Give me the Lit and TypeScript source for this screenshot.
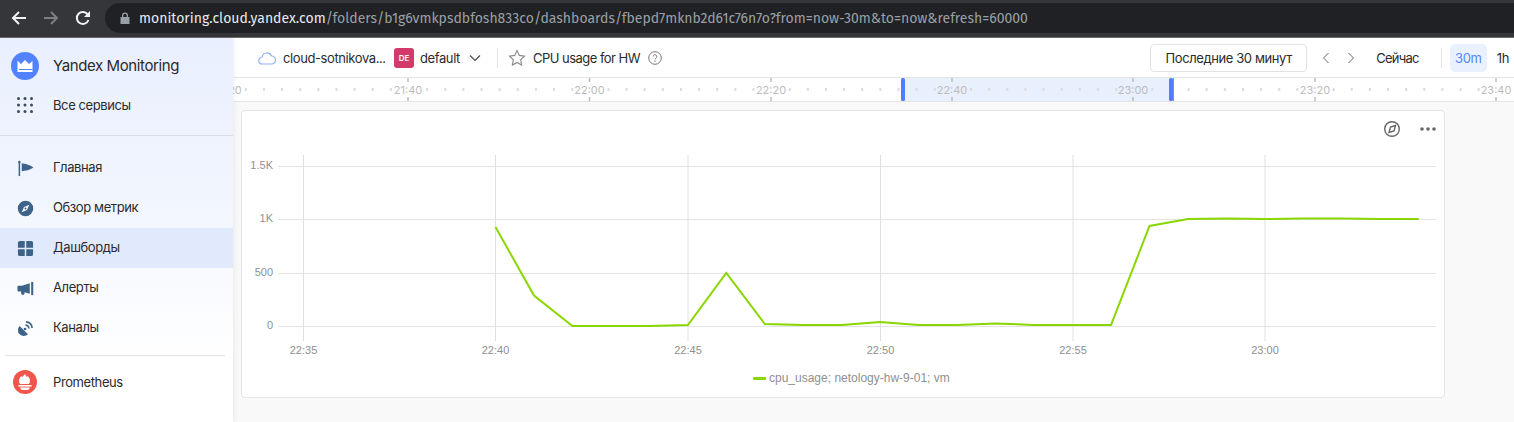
import { LitElement, html, css, svg } from 'lit';
import { customElement } from 'lit/decorators.js';

const NAV = [
  { label: 'Главная', icon: 'flag' },
  { label: 'Обзор метрик', icon: 'compass' },
  { label: 'Дашборды', icon: 'grid', active: true },
  { label: 'Алерты', icon: 'horn' },
  { label: 'Каналы', icon: 'dish' },
];

const NAV_ICONS: Record<string, any> = {
  flag: svg`<path d="M2.500 2v15" stroke="#3d6488" stroke-width="1.600"/><circle cx="2.500" cy="2" r="1.300"/><path d="M5 3.500c3 .2 9 2 12.500 4.500-3.500 2.500-9 3.800-12.500 3.800z"/>`,
  compass: svg`<path fill-rule="evenodd" d="M9 .8a8.200 8.200 0 1 1 0 16.400A8.200 8.200 0 0 1 9 .8zm4 4.200L7.400 7.400 5 13l5.600-2.400zM9 8a1 1 0 1 1 0 2 1 1 0 0 1 0-2z"/>`,
  grid: svg`<path d="M1 3a2 2 0 0 1 2-2h5.200v7.200H1zM9.800 1H15a2 2 0 0 1 2 2v5.200H9.800zM1 9.800h7.200V17H3a2 2 0 0 1-2-2zM9.800 9.800H17V15a2 2 0 0 1-2 2H9.800z"/>`,
  horn: svg`<path d="M.5 7.200c0-.7.500-1.200 1.200-1.200h3.500L13.500 3.500v11L8 13v1a1.800 1.800 0 0 1-3.600 0v-1.800H1.700C1 12.200.5 11.700.5 11z"/><path d="M15 2h2.200v14H15z"/>`,
  dish: svg`<path d="M2.800 6.400l8.800 8.800a6 6 0 0 1-8.800-8.800z"/><path d="M9.500 2a6.500 6.500 0 0 1 6.500 6.500" fill="none" stroke="#3d6488" stroke-width="1.800"/><path d="M9 5.400A3.600 3.600 0 0 1 12.600 9" fill="none" stroke="#3d6488" stroke-width="1.800"/><circle cx="8.500" cy="9.500" r="1.400"/>`,
};

@customElement('app-root')
class AppRoot extends LitElement {
  static styles = css`
    :host {
      display: block;
      width: 1514px;
      height: 422px;
      overflow: hidden;
      font-family: Inter, 'Noto Sans', sans-serif;
      font-size: 13px;
      letter-spacing: -0.4px;
      color: #2b2b2b;
      background: #f9f9f9;
    }
    .chrome {
      height: 38px;
      box-sizing: border-box;
      background: #35363a;
      border-bottom: 1px solid #6b6b6b;
      display: flex;
      align-items: center;
      padding: 0 0 1px 11px;
      gap: 16px;
    }
    .chrome svg {
      display: block;
      flex: none;
    }
    .url {
      flex: 1;
      height: 30px;
      margin-left: -2px;
      border-radius: 15px 0 0 15px;
      background: #202124;
      display: flex;
      align-items: center;
      padding-left: 15px;
      gap: 9px;
      font: 14px 'Fira Sans', 'Noto Sans', sans-serif;
      letter-spacing: 0;
      color: #9aa0a6;
    }
    .url b {
      font-weight: 400;
      color: #e8eaed;
    }
    .body {
      display: flex;
      height: 384px;
    }
    .side {
      width: 233px;
      flex: none;
      background: linear-gradient(180deg, #e9effe 0%, #f1f5fe 40%, #ffffff 85%);
      box-shadow: 1px 0 6px rgba(0, 0, 0, 0.07);
      position: relative;
      z-index: 1;
    }
    .side-head {
      padding: 8px 0 10px;
      border-bottom: 1px solid #d9dce6;
    }
    .row {
      height: 40px;
      display: flex;
      align-items: center;
    }
    .logo-row {
      height: 39px;
      font-size: 15px;
    }
    .slot {
      width: 53px;
      flex: none;
      display: flex;
      justify-content: center;
      padding-right: 3px;
      box-sizing: border-box;
    }
    .slot svg {
      display: block;
    }
    .nav {
      padding-top: 12px;
    }
    .nav-label {
      padding-bottom: 2px;
    }
    .row.active {
      background: #e1e9fc;
    }
    .side-rule {
      height: 1px;
      background: #e3e3e3;
      margin: 7px 8px 6px 5px;
    }
    .main {
      flex: 1;
      min-width: 0;
    }
    .top {
      height: 39px;
      background: #fff;
      display: flex;
      align-items: center;
      padding: 0 5px 0 25px;
      white-space: nowrap;
    }
    .crumb {
      margin-left: 7px;
      width: 106px;
    }
    .badge {
      width: 20px;
      height: 20px;
      border-radius: 3px;
      background: #d33a69;
      color: #fff;
      font-size: 8px;
      font-weight: 600;
      letter-spacing: 0;
      display: flex;
      align-items: center;
      justify-content: center;
      margin-left: 5px;
    }
    .title {
      margin-left: 7px;
      letter-spacing: -0.52px;
    }
    .now {
      margin-left: 21px;
      letter-spacing: -0.73px;
    }
    .vr {
      width: 1px;
      height: 20px;
      background: #e5e5e5;
    }
    .range {
      margin-left: auto;
      width: 157px;
      height: 28px;
      box-sizing: border-box;
      border: 1px solid #e2e2e2;
      border-radius: 4px;
      display: flex;
      align-items: center;
      justify-content: center;
    }
    .zoom-on {
      width: 37px;
      height: 28px;
      border-radius: 5px;
      background: #e9f0fe;
      color: #5a87f2;
      display: flex;
      align-items: center;
      justify-content: center;
      margin-left: 8px;
    }
    .timeline {
      display: block;
      border-top: 1px solid #e5e5e5;
      border-bottom: 1px solid #e5e5e5;
      background: #fff;
    }
    .timeline text {
      font-family: Inter, sans-serif;
      letter-spacing: 0;
    }
    .content {
      padding: 8px 0 0 8px;
    }
    .panel {
      width: 1204px;
      height: 288px;
      box-sizing: border-box;
      background: #fff;
      border: 1px solid #e5e5e5;
      border-radius: 4px;
    }
    .panel svg {
      display: block;
    }
    .panel text {
      font-family: 'Liberation Sans', Arial, sans-serif;
      letter-spacing: 0;
    }
  `;

  renderTimeline() {
    // x is counted from the left edge of the main column (page x - 233)
    const major = [
      { x: 175, t: '21:40' },
      { x: 356.5, t: '22:00' },
      { x: 538, t: '22:20' },
      { x: 719, t: '22:40' },
      { x: 900, t: '23:00' },
      { x: 1082, t: '23:20' },
      { x: 1263, t: '23:40' },
    ];
    const minor: number[] = [];
    for (let x = -6.3; x < 1290; x += 18.13) {
      if (!major.some((m) => Math.abs(m.x - x) < 10)) minor.push(x);
    }
    return html`<svg class="timeline" width="1281" height="23" viewBox="0 0 1281 23">
      <rect x="668" y="0" width="271" height="23" fill="#e8effd" />
      ${minor.map((x) => svg`<rect x=${x} y="10" width="2" height="3" fill="#dcdcdc" />`)}
      ${major.map(
        (m) => svg`
          <rect x=${m.x - 15} y="6" width="30" height="11" fill=${m.x > 668 && m.x < 939 ? '#e8effd' : '#fff'} />
          <path d="M${m.x} 0v4M${m.x} 19v4" stroke="#bdbdbd" stroke-width="1.500" />
          <text x=${m.x} y="15.500" text-anchor="middle" font-size="11" fill="#bcbcbc">${m.t}</text>`,
      )}
      <text x="-5" y="15.500" font-size="11" fill="#bcbcbc">20</text>
      <rect x="668" y="0" width="4" height="23" rx="1.500" fill="#4f7fff" />
      <rect x="936" y="0" width="4" height="23" rx="1.500" fill="#4f7fff" />
      <rect x="940" y="0" width="1" height="23" fill="#f0636a" />
    </svg>`;
  }

  renderChart() {
    // the panel's inner box starts at page (242, 111)
    const ys = [
      { y: 55, t: '1.5K' },
      { y: 108, t: '1K' },
      { y: 162, t: '500' },
      { y: 215, t: '0' },
    ];
    const xs = [
      { x: 61.5, t: '22:35' },
      { x: 253.5, t: '22:40' },
      { x: 446, t: '22:45' },
      { x: 638.5, t: '22:50' },
      { x: 831, t: '22:55' },
      { x: 1023, t: '23:00' },
    ];
    const vals = [116, 184.5, 215, 215, 215, 214, 162, 213, 214, 214, 211, 214, 214, 212.5, 214, 214, 214, 115, 108, 107.5, 108, 107.5, 107.5, 108, 108];
    const pts = vals.map((y, i) => `${(253.5 + i * 38.47).toFixed(1)},${y}`).join(' ');
    return html`<svg width="1202" height="286" viewBox="0 0 1202 286">
      ${ys.map(
        (l) => svg`
          <path d="M36 ${l.y + 0.5}H1194" stroke="#e4e4e4" />
          <text x="31" y=${l.y + 3} text-anchor="end" font-size="11" fill="#8f8f8f">${l.t}</text>`,
      )}
      ${xs.map(
        (l) => svg`
          <path d="M${l.x} 44V230" stroke="#e0e0e0" />
          <text x=${l.x} y="243" text-anchor="middle" font-size="11" fill="#8f8f8f">${l.t}</text>`,
      )}
      <polyline points=${pts} fill="none" stroke="#8ad600" stroke-width="2" />
      <rect x="511" y="266" width="13" height="3" rx="1" fill="#8ad600" />
      <text x="527" y="271" font-size="12" fill="#8f8f8f">cpu_usage; netology-hw-9-01; vm</text>
      <g fill="none" stroke="#666" stroke-width="1.400">
        <circle cx="1150" cy="18" r="7.300" />
        <path d="M1153.500 14.500l-5 1.500-1.500 5.500 5-1.500z" />
      </g>
      <g fill="#666">
        <circle cx="1180" cy="18" r="1.800" />
        <circle cx="1186" cy="18" r="1.800" />
        <circle cx="1192" cy="18" r="1.800" />
      </g>
    </svg>`;
  }

  render() {
    return html`
      <div class="chrome">
        <svg width="16" height="16" viewBox="0 0 16 16"><path d="M15 8H2M8 2L2 8l6 6" fill="none" stroke="#f1f3f4" stroke-width="2" /></svg>
        <svg width="16" height="16" viewBox="0 0 16 16"><path d="M1 8h13M8 2l6 6-6 6" fill="none" stroke="#7d7f82" stroke-width="2" /></svg>
        <svg width="16" height="16" viewBox="0 0 16 16"><path d="M13.500 10a6 6 0 1 1-.6-5.300" fill="none" stroke="#f1f3f4" stroke-width="2" /><path d="M15 1v6H9z" fill="#f1f3f4" /></svg>
        <div class="url">
          <svg width="10" height="12" viewBox="0 0 10 12"><path d="M2 5V3.500a3 3 0 0 1 6 0V5h1.500v7H.5V5zm1.300 0h3.400V3.500a1.700 1.700 0 0 0-3.400 0z" fill="#9aa0a6" /></svg>
          <span><b>monitoring.cloud.yandex.com</b>/folders/b1g6vmkpsdbfosh833co/dashboards/fbepd7mknb2d61c76n7o?from=now-30m&amp;to=now&amp;refresh=60000</span>
        </div>
      </div>
      <div class="body">
        <aside class="side">
          <div class="side-head">
            <div class="row logo-row">
              <div class="slot">
                <svg width="28" height="28" viewBox="0 0 28 28"><circle cx="14" cy="14" r="14" fill="#5282ff" /><path d="M6.500 9v11h15V9l-3.500 3-4-4-4 4-2.500-2.200V9z" fill="#fff" /><path d="M8 17.500h13.500" stroke="#5282ff" /></svg>
              </div>
              Yandex Monitoring
            </div>
            <div class="row">
              <div class="slot">
                <svg width="16" height="16" viewBox="0 0 16 16" fill="#3b4a5c">
                  ${[1.5, 8, 14.5].flatMap((y) => [1.5, 8, 14.5].map((x) => svg`<circle cx=${x} cy=${y} r="1.500" />`))}
                </svg>
              </div>
              Все сервисы
            </div>
          </div>
          <nav class="nav">
            ${NAV.map(
              (n) => html`
                <div class="row ${n.active ? 'active' : ''}">
                  <div class="slot">
                    <svg width="17" height="17" viewBox="0 0 18 18" fill="#3d6488">${NAV_ICONS[n.icon]}</svg>
                  </div>
                  <span class="nav-label">${n.label}</span>
                </div>
              `,
            )}
          </nav>
          <div class="side-rule"></div>
          <div class="row">
            <div class="slot">
              <svg width="24" height="24" viewBox="0 0 24 24"><circle cx="12" cy="12" r="12" fill="#f1554c" /><path d="M12 3.500c.4 2 1.300 2.600 2 3.800.4-.5.6-1 .6-1.600 1.500 1.500 2.400 3.300 2.400 5 0 1.200-.4 2.300-1.100 3.300H7.100C6.400 13 6 11.900 6 10.700c0-1.700 1-3.500 2.400-5 0 .6.200 1.100.6 1.600.8-1.200 2.600-2 3-3.800z" fill="#fff" /><path d="M5.500 15h13v1.600h-13z" fill="#fff" /><path d="M7 17.600h10l-1.600 2.400H8.600z" fill="#fff" /></svg>
            </div>
            Prometheus
          </div>
        </aside>
        <div class="main">
          <div class="top">
            <svg width="18" height="14" viewBox="0 0 18 14"><path d="M4.500 13a3.500 3.500 0 0 1-.4-7A5 5 0 0 1 13.600 5 4 4 0 0 1 13.500 13z" fill="none" stroke="#8fb0f5" stroke-width="1.200" /></svg>
            <span class="crumb">cloud-sotnikova...</span>
            <span class="badge">DE</span>
            <span style="margin-left:6px">default</span>
            <svg style="margin-left:9px" width="12" height="8" viewBox="0 0 12 8"><path d="M1 1.500l5 5 5-5" fill="none" stroke="#444" stroke-width="1.100" /></svg>
            <span class="vr" style="margin-left:16px"></span>
            <svg style="margin-left:10px" width="18" height="17" viewBox="0 0 18 17"><path d="M9 1.500l2.300 4.900 5.200.7-3.800 3.700.9 5.300L9 13.500l-4.600 2.600.9-5.300L1.500 7.100l5.200-.7z" fill="none" stroke="#888" stroke-width="1.100" /></svg>
            <span class="title">CPU usage for HW</span>
            <svg style="margin-left:8px" width="14" height="14" viewBox="0 0 14 14"><circle cx="7" cy="7" r="6.300" fill="none" stroke="#777" /><path d="M5.200 5.500a1.800 1.800 0 1 1 2.700 1.600c-.6.400-.9.700-.9 1.400" fill="none" stroke="#777" /><circle cx="7" cy="10.300" r=".7" fill="#777" /></svg>
            <div class="range">Последние 30 минут</div>
            <svg style="margin-left:15px" width="8" height="12" viewBox="0 0 8 12"><path d="M6.500 1l-5 5 5 5" fill="none" stroke="#666" /></svg>
            <svg style="margin-left:17px" width="8" height="12" viewBox="0 0 8 12"><path d="M1.500 1l5 5-5 5" fill="none" stroke="#666" /></svg>
            <span class="now">Сейчас</span>
            <span class="vr" style="margin-left:22px"></span>
            <span class="zoom-on">30m</span>
            <span style="margin-left:10px">1h</span>
          </div>
          ${this.renderTimeline()}
          <div class="content">
            <div class="panel">${this.renderChart()}</div>
          </div>
        </div>
      </div>
    `;
  }
}

declare global {
  interface HTMLElementTagNameMap {
    'app-root': AppRoot;
  }
}
